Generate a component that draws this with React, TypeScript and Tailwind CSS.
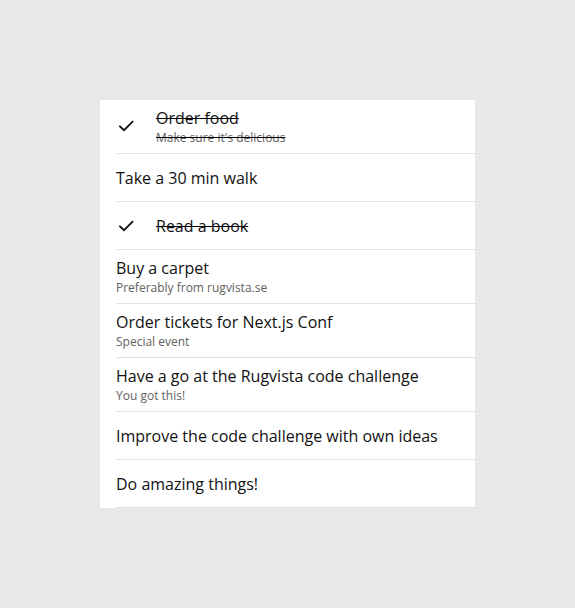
type Todo = { title: string; note?: string; done?: boolean };

const todos: Todo[] = [
  { title: 'Order food', note: "Make sure it's delicious", done: true },
  { title: 'Take a 30 min walk' },
  { title: 'Read a book', done: true },
  { title: 'Buy a carpet', note: 'Preferably from rugvista.se' },
  { title: 'Order tickets for Next.js Conf', note: 'Special event' },
  { title: 'Have a go at the Rugvista code challenge', note: 'You got this!' },
  { title: 'Improve the code challenge with own ideas' },
  { title: 'Do amazing things!' },
];

function CheckIcon() {
  return (
    <svg width="20" height="20" viewBox="0 0 20 20" fill="none" stroke="currentColor" strokeWidth="1.8" strokeLinecap="square">
      <polyline points="4,10.5 8,14.2 16.5,5.8" />
    </svg>
  );
}

export default function App() {
  return (
    <div className="min-h-[608px] w-full bg-[#e8e8e8] pt-[100px] font-['Open_Sans',sans-serif]">
      <ul className="mx-auto w-[375px] bg-white">
        {todos.map((t) => (
          <li key={t.title} className="pl-4">
            <div
              className={`flex items-center border-b border-[#e0e0e0] ${
                t.note ? 'min-h-[54px] pt-[6px] pb-[7px]' : 'min-h-[48px]'
              }`}
            >
              {t.done && (
                <span className="flex w-10 shrink-0 items-center text-[#111111]">
                  <CheckIcon />
                </span>
              )}
              <div className={t.done ? 'line-through' : ''}>
                <div className="text-base leading-6 text-[#111111]">{t.title}</div>
                {t.note && <div className="text-xs leading-4 text-[#5f5f5f]">{t.note}</div>}
              </div>
            </div>
          </li>
        ))}
      </ul>
    </div>
  );
}
